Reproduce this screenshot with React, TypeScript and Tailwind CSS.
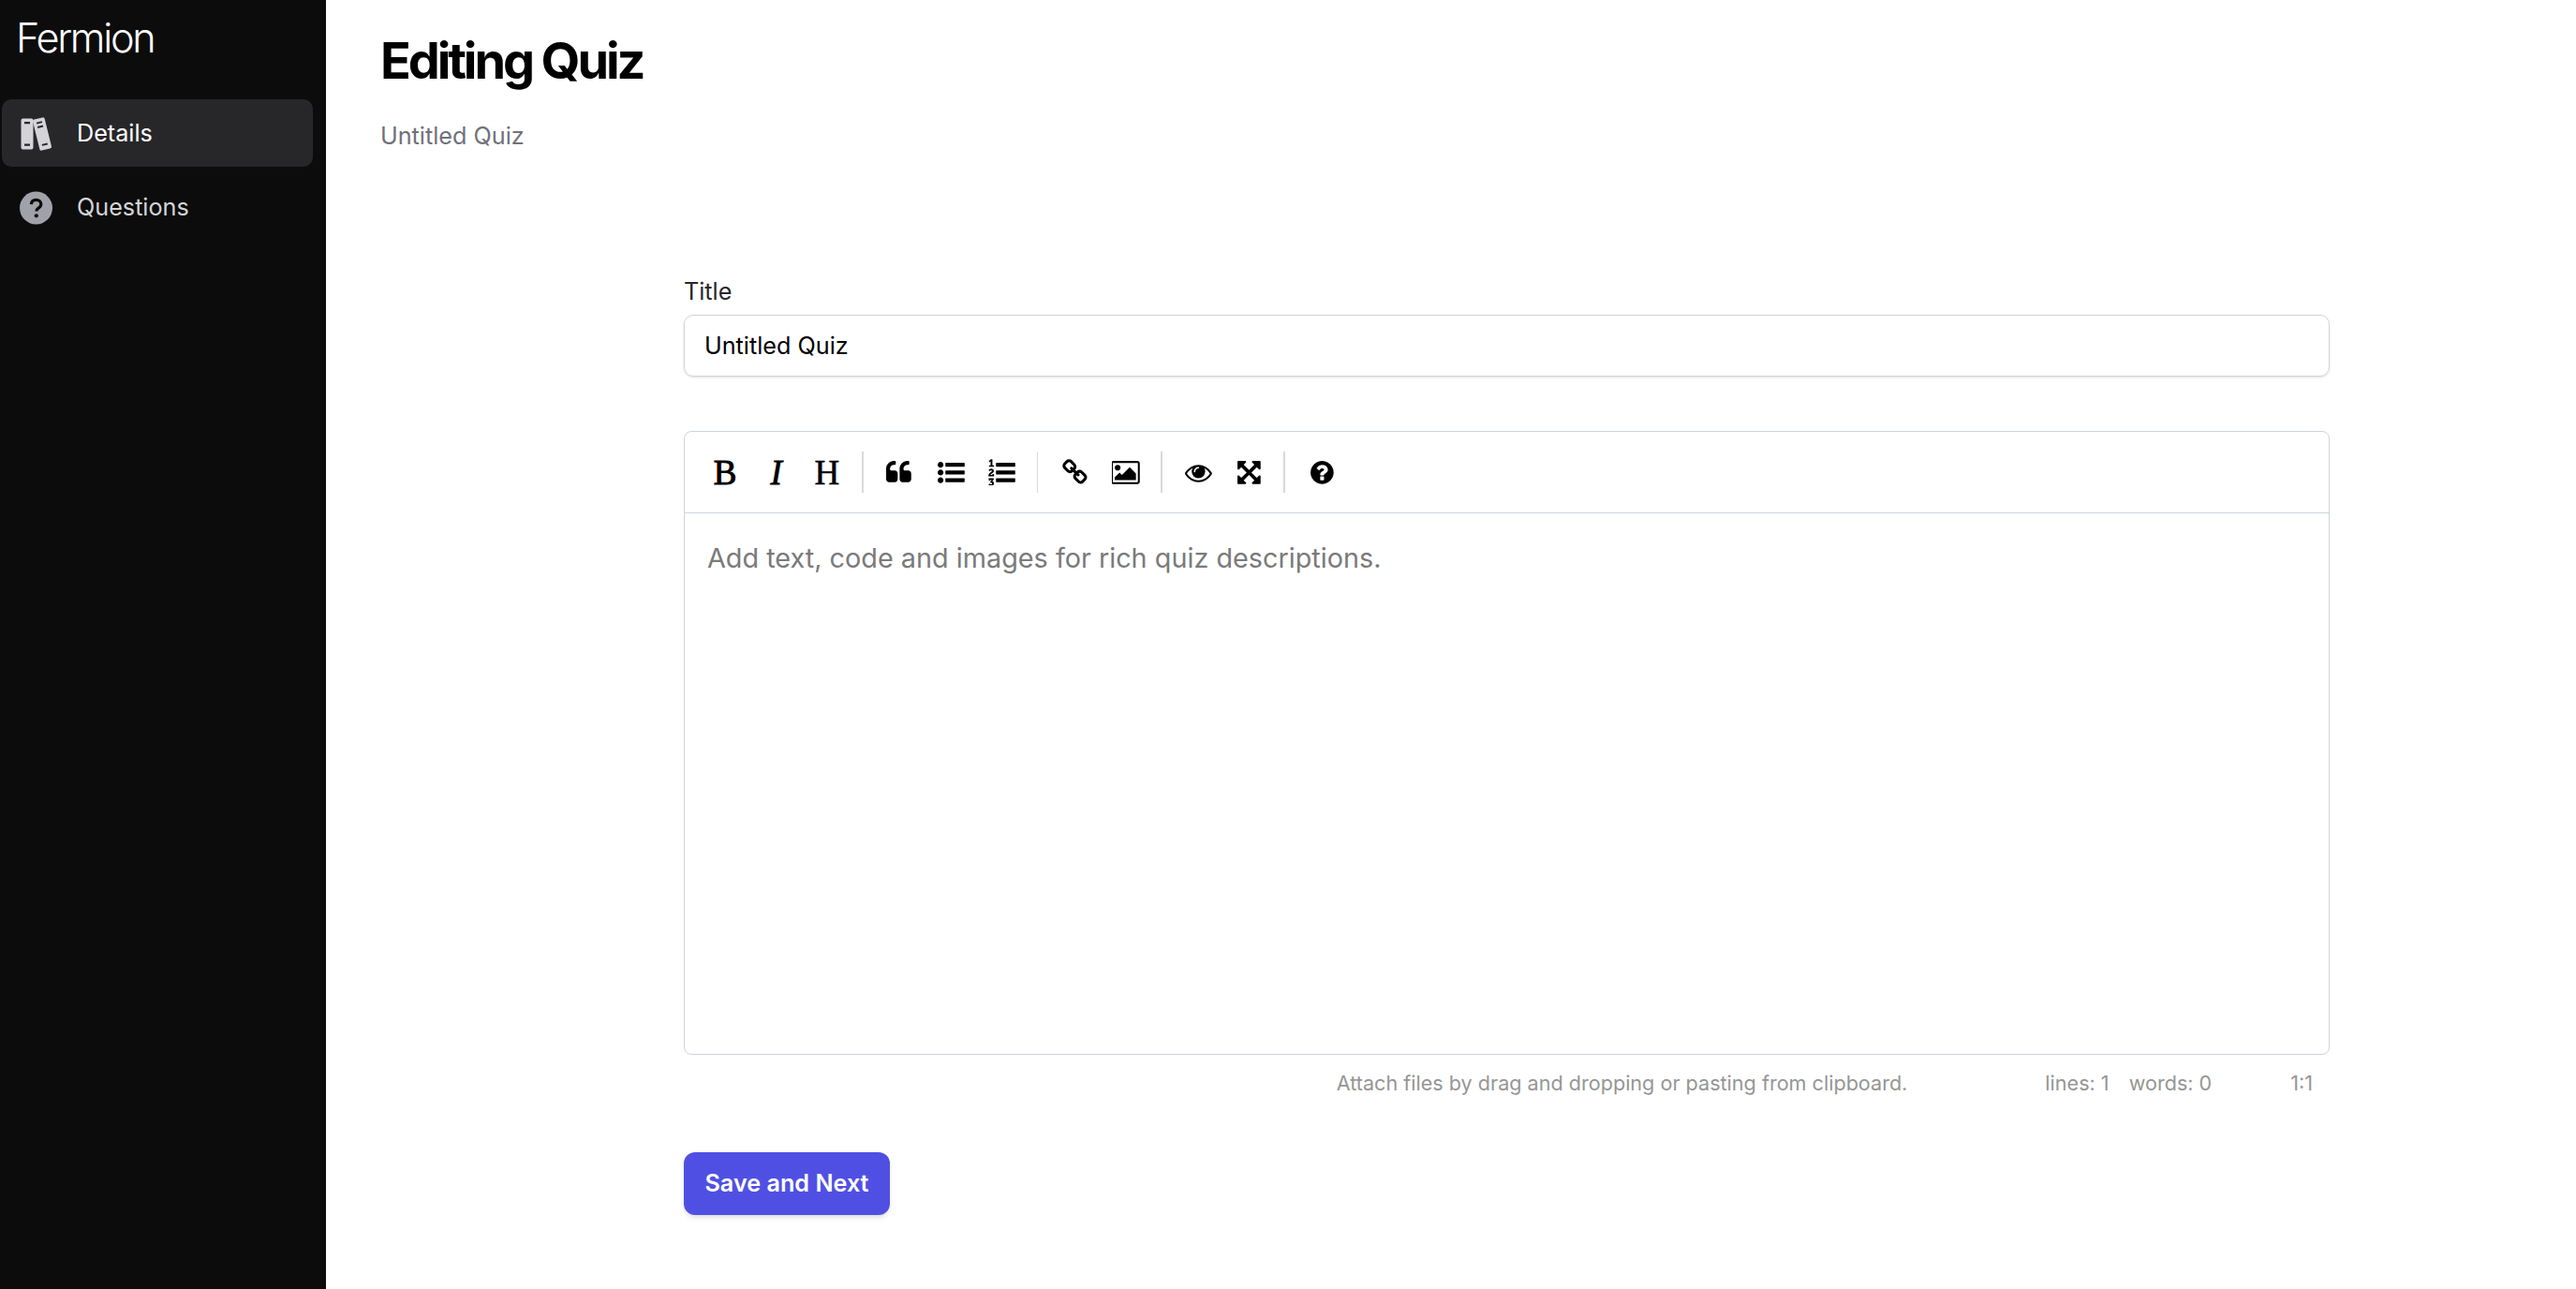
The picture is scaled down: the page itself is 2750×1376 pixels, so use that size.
const inter = 'font-["Inter","Noto_Sans",sans-serif]'

function FaPath({ d, wide }: { d: string; wide?: boolean }) {
  return (
    <svg viewBox={wide ? '0 0 1920 1792' : '0 0 1792 1792'} className={`h-[28.8px] fill-current ${wide ? 'w-[30.8px]' : 'w-[28.8px]'}`}>
      <path d={d} />
    </svg>
  )
}

const quote =
  'M768 960v384q0 80-56 136t-136 56h-384q-80 0-136-56t-56-136v-704q0-104 40.5-198.5t109.5-163.5 163.5-109.5 198.5-40.5h64q26 0 45 19t19 45v128q0 26-19 45t-45 19h-64q-106 0-181 75t-75 181v32q0 40 28 68t68 28h224q80 0 136 56t56 136zm896 0v384q0 80-56 136t-136 56h-384q-80 0-136-56t-56-136v-704q0-104 40.5-198.5t109.5-163.5 163.5-109.5 198.5-40.5h64q26 0 45 19t19 45v128q0 26-19 45t-45 19h-64q-106 0-181 75t-75 181v32q0 40 28 68t68 28h224q80 0 136 56t56 136z'
const listUl =
  'M384 1408q0 80-56 136t-136 56-136-56-56-136 56-136 136-56 136 56 56 136zm0-512q0 80-56 136t-136 56-136-56-56-136 56-136 136-56 136 56 56 136zm1408 416v192q0 13-9.5 22.5t-22.5 9.5h-1216q-13 0-22.5-9.5t-9.5-22.5v-192q0-13 9.5-22.5t22.5-9.5h1216q13 0 22.5 9.5t9.5 22.5zm-1408-928q0 80-56 136t-136 56-136-56-56-136 56-136 136-56 136 56 56 136zm1408 416v192q0 13-9.5 22.5t-22.5 9.5h-1216q-13 0-22.5-9.5t-9.5-22.5v-192q0-13 9.5-22.5t22.5-9.5h1216q13 0 22.5 9.5t9.5 22.5zm0-512v192q0 13-9.5 22.5t-22.5 9.5h-1216q-13 0-22.5-9.5t-9.5-22.5v-192q0-13 9.5-22.5t22.5-9.5h1216q13 0 22.5 9.5t9.5 22.5z'
const listOl =
  'M381 1620q0 80-54.5 126t-135.5 46q-106 0-172-66l57-88q49 45 106 45 29 0 50.5-14.5t21.5-42.5q0-64-105-56l-26-56q8-10 32.5-43.5t42.5-54 37-38.5v-1q-16 0-48.5 1t-48.5 1v53h-106v-152h333v88l-95 115q51 12 81 49t30 88zm2-627v159h-362q-6-36-6-54 0-51 23.5-93t56.5-68 66-47.5 56.5-43.5 23.5-45q0-25-14.5-38.5t-39.5-13.5q-46 0-81 58l-85-59q24-51 71.5-79.5t105.5-28.5q73 0 123 41.5t50 112.5q0 50-34 91.5t-75 64.5-75.5 50.5-35.5 52.5h127v-60h105zm1409 319v192q0 13-9.5 22.5t-22.5 9.5h-1216q-13 0-22.5-9.5t-9.5-22.5v-192q0-14 9-23t23-9h1216q13 0 22.5 9.5t9.5 22.5zm-1408-899v99h-335v-99h107q0-41 .5-122t.5-121v-12h-2q-8 17-50 54l-71-76 136-127h106v404h108zm1408 387v192q0 13-9.5 22.5t-22.5 9.5h-1216q-13 0-22.5-9.5t-9.5-22.5v-192q0-14 9-23t23-9h1216q13 0 22.5 9.5t9.5 22.5zm0-512v192q0 13-9.5 22.5t-22.5 9.5h-1216q-13 0-22.5-9.5t-9.5-22.5v-192q0-13 9.5-22.5t22.5-9.5h1216q13 0 22.5 9.5t9.5 22.5z'
const link =
  'M1520 1216q0-40-28-68l-208-208q-28-28-68-28-42 0-72 32 3 3 19 18.5t21.5 21.5 15 19 13 25.5 3.5 27.5q0 40-28 68t-68 28q-15 0-27.5-3.5t-25.5-13-19-15-21.5-21.5-18.5-19q-33 31-33 73 0 40 28 68l206 207q27 27 68 27 40 0 68-26l147-146q28-28 28-67zm-703-705q0-40-28-68l-206-207q-28-28-68-28-39 0-68 27l-147 146q-28 28-28 67 0 40 28 68l208 208q27 27 68 27 42 0 72-31-3-3-19-18.5t-21.5-21.5-15-19-13-25.5-3.5-27.5q0-40 28-68t68-28q15 0 27.5 3.5t25.5 13 19 15 21.5 21.5 18.5 19q33-31 33-73zm895 705q0 120-85 203l-147 146q-83 83-203 83-121 0-204-85l-206-207q-83-83-83-203 0-123 88-209l-88-88q-86 88-208 88-120 0-204-84l-208-208q-84-84-84-204t85-203l147-146q83-83 203-83 121 0 204 85l206 207q83 83 83 203 0 123-88 209l88 88q86-88 208-88 120 0 204 84l208 208q84 84 84 204z'
const picture =
  'M576 576q0 80-56 136t-136 56-136-56-56-136 56-136 136-56 136 56 56 136zm1024 384v448h-1408v-192l320-320 160 160 512-512zm96-704h-1600q-13 0-22.5 9.5t-9.5 22.5v1216q0 13 9.5 22.5t22.5 9.5h1600q13 0 22.5-9.5t9.5-22.5v-1216q0-13-9.5-22.5t-22.5-9.5zm160 32v1216q0 66-47 113t-113 47h-1600q-66 0-113-47t-47-113v-1216q0-66 47-113t113-47h1600q66 0 113 47t47 113z'
const eye =
  'M1664 960q-152-236-381-353 61 104 61 225 0 185-131.5 316.5t-316.5 131.5-316.5-131.5-131.5-316.5q0-121 61-225-229 117-381 353 133 205 333.5 326.5t434.5 121.5 434.5-121.5 333.5-326.5zm-720-384q0-20-14-34t-34-14q-125 0-214.5 89.5t-89.5 214.5q0 20 14 34t34 14 34-14 14-34q0-86 61-147t147-61q20 0 34-14t14-34zm848 384q0 34-20 69-140 230-376.5 368.5t-499.5 138.5-499.5-139-376.5-368q-20-35-20-69t20-69q140-229 376.5-368t499.5-139 499.5 139 376.5 368q20 35 20 69z'
const arrows =
  'M1411 541l-355 355 355 355 144-144q29-31 70-14 39 17 39 59v448q0 26-19 45t-45 19h-448q-42 0-59-40-17-39 14-69l144-144-355-355-355 355 144 144q31 30 14 69-17 40-59 40h-448q-26 0-45-19t-19-45v-448q0-42 40-59 39-17 69 14l144 144 355-355-355-355-144 144q-19 19-45 19-12 0-24-5-40-17-40-59v-448q0-26 19-45t45-19h448q42 0 59 40 17 39-14 69l-144 144 355 355 355-355-144-144q-31-30-14-69 17-40 59-40h448q26 0 45 19t19 45v448q0 42-39 59-13 5-25 5-26 0-45-19z'
const help =
  'M1024 1376v-192q0-14-9-23t-23-9h-192q-14 0-23 9t-9 23v192q0 14 9 23t23 9h192q14 0 23-9t9-23zm256-672q0-88-55.5-163t-138.5-116-170-41q-243 0-371 213-15 24 8 42l132 100q7 6 19 6 16 0 25-12 53-68 86-92 34-24 86-24 48 0 85.5 26t37.5 59q0 38-20 61t-68 45q-63 28-115.5 86.5t-52.5 125.5v36q0 14 9 23t23 9h192q14 0 23-9t9-23q0-19 21.5-49.5t54.5-49.5q32-18 49-28.5t46-35 44.5-48 28-60.5 12.5-81zm384 192q0 209-103 385.5t-279.5 279.5-385.5 103-385.5-103-279.5-279.5-103-385.5 103-385.5 279.5-279.5 385.5-103 385.5 103 279.5 279.5 103 385.5z'

function BooksIcon() {
  return (
    <svg viewBox="0 0 36 36" className="h-9 w-9">
      <path
        fillRule="evenodd"
        fill="#d4d4d8"
        d="M3.5 1.5h9a2 2 0 0 1 2 2v29a2 2 0 0 1-2 2h-9a2 2 0 0 1-2-2v-29a2 2 0 0 1 2-2zM5 5v2.2h6V5zM5 28.5v2.2h6v-2.2z"
      />
      <g transform="rotate(-14 24 18)">
        <path
          fillRule="evenodd"
          fill="#d4d4d8"
          d="M19.5 1h9a2 2 0 0 1 2 2v30a2 2 0 0 1-2 2h-9a2 2 0 0 1-2-2v-30a2 2 0 0 1 2-2zM21 4.5v2h6v-2zM21 9v2h6v-2zM21 28.5v2h6v-2z"
        />
      </g>
    </svg>
  )
}

function QuestionIcon() {
  return (
    <svg viewBox="0 0 36 36" className="h-9 w-9">
      <circle cx="17.5" cy="18" r="17.5" fill="#a1a1aa" />
      <path
        d="M12.3 14.2c.3-3 2.4-4.8 5.3-4.8 3 0 5.2 1.8 5.2 4.5 0 2-1 3.1-2.7 4.2-1.5 1-2.2 1.7-2.2 3.3"
        fill="none"
        stroke="#0c0c0c"
        strokeWidth="3.2"
      />
      <circle cx="17.8" cy="26.3" r="2.1" fill="#0c0c0c" />
    </svg>
  )
}

function ToolButton({ children, className = '' }: { children: React.ReactNode; className?: string }) {
  return <div className={`flex h-[52px] w-[54.4px] items-center justify-center text-black ${className}`}>{children}</div>
}

function Sep() {
  return <div className="ml-[10px] mr-[12px] h-[44px] w-[1.5px] bg-[#d9d9d9]" />
}

function Letter({ children, className }: { children: string; className: string }) {
  return <span className={`font-["Liberation_Serif",serif] text-[37px] leading-none ${className}`}>{children}</span>
}

export default function App() {
  return (
    <div className={`flex h-[1376px] w-full overflow-hidden bg-white ${inter}`}>
      <aside className="flex w-[348px] shrink-0 flex-col bg-[#0c0c0c] px-[2px]">
        <div className="pl-[15px] pt-[14px] text-[43.2px] font-light leading-[52px] tracking-[-2.3px] text-white">Fermion</div>
        <nav className="mt-[40px] flex w-[332px] flex-col gap-[7px]">
          <a className="flex h-[72px] items-center gap-[25px] rounded-[10px] bg-[#27272a] pl-[19px] pt-[1px] text-[25.2px] text-white">
            <BooksIcon />
            Details
          </a>
          <a className="flex h-[72px] items-center gap-[25px] rounded-[10px] pl-[19px] pt-[1px] text-[25.2px] text-[#d4d4d8]">
            <QuestionIcon />
            Questions
          </a>
        </nav>
      </aside>

      <main className="min-w-0 flex-1 pl-[58px]">
        <h1 className="pt-[30px] text-[54px] font-bold leading-[70px] tracking-[-3.1px] text-black">Editing Quiz</h1>
        <p className="mt-[23px] text-[25.2px] leading-[44px] text-[#71717a]">Untitled Quiz</p>

        <div className="ml-[324px] mt-[126px] w-[1757px]">
          <label className="block text-[25.2px] leading-[36px] text-[#27272a]">Title</label>
          <div className="mt-[7px] flex h-[66px] items-center rounded-[10px] border-[1.5px] border-[#d4d4d8] pl-[21px] pt-[1px] text-[25.2px] text-black shadow-sm">
            Untitled Quiz
          </div>

          <div className="mt-[58px] flex h-[666px] flex-col rounded-[8px] border-[1.5px] border-[#ced4da]">
            <div className="flex h-[87px] shrink-0 items-center border-b-[1.5px] border-[#ced4da] pl-[16px]">
              <ToolButton><Letter className="[-webkit-text-stroke:0.9px_black]">B</Letter></ToolButton>
              <ToolButton><Letter className="italic [-webkit-text-stroke:0.8px_black]">I</Letter></ToolButton>
              <ToolButton><Letter className="[-webkit-text-stroke:0.5px_black]">H</Letter></ToolButton>
              <Sep />
              <ToolButton><FaPath d={quote} /></ToolButton>
              <ToolButton><FaPath d={listUl} /></ToolButton>
              <ToolButton><FaPath d={listOl} /></ToolButton>
              <Sep />
              <ToolButton><FaPath d={link} /></ToolButton>
              <ToolButton><FaPath d={picture} wide /></ToolButton>
              <Sep />
              <ToolButton><FaPath d={eye} /></ToolButton>
              <ToolButton className="-ml-[1px]"><FaPath d={arrows} /></ToolButton>
              <Sep />
              <ToolButton><FaPath d={help} /></ToolButton>
            </div>
            <div className="px-[24px] pt-[28px] text-[28.8px] leading-[40px] text-[#7a7a7a]">
              Add text, code and images for rich quiz descriptions.
            </div>
          </div>

          <div className="mt-[14px] flex h-[32px] items-center justify-end pr-[18px] text-[21.6px] text-[#959694]">
            <span>Attach files by drag and dropping or pasting from clipboard.</span>
            <span className="ml-[147px]">lines: 1</span>
            <span className="ml-[21px]">words: 0</span>
            <span className="ml-[84px]">1:1</span>
          </div>

          <button className="mt-[58px] flex h-[67px] w-[220px] items-center justify-center rounded-[12px] bg-[#4f50e3] text-[25.2px] font-semibold text-white shadow-md">
            Save and Next
          </button>
        </div>
      </main>
    </div>
  )
}
